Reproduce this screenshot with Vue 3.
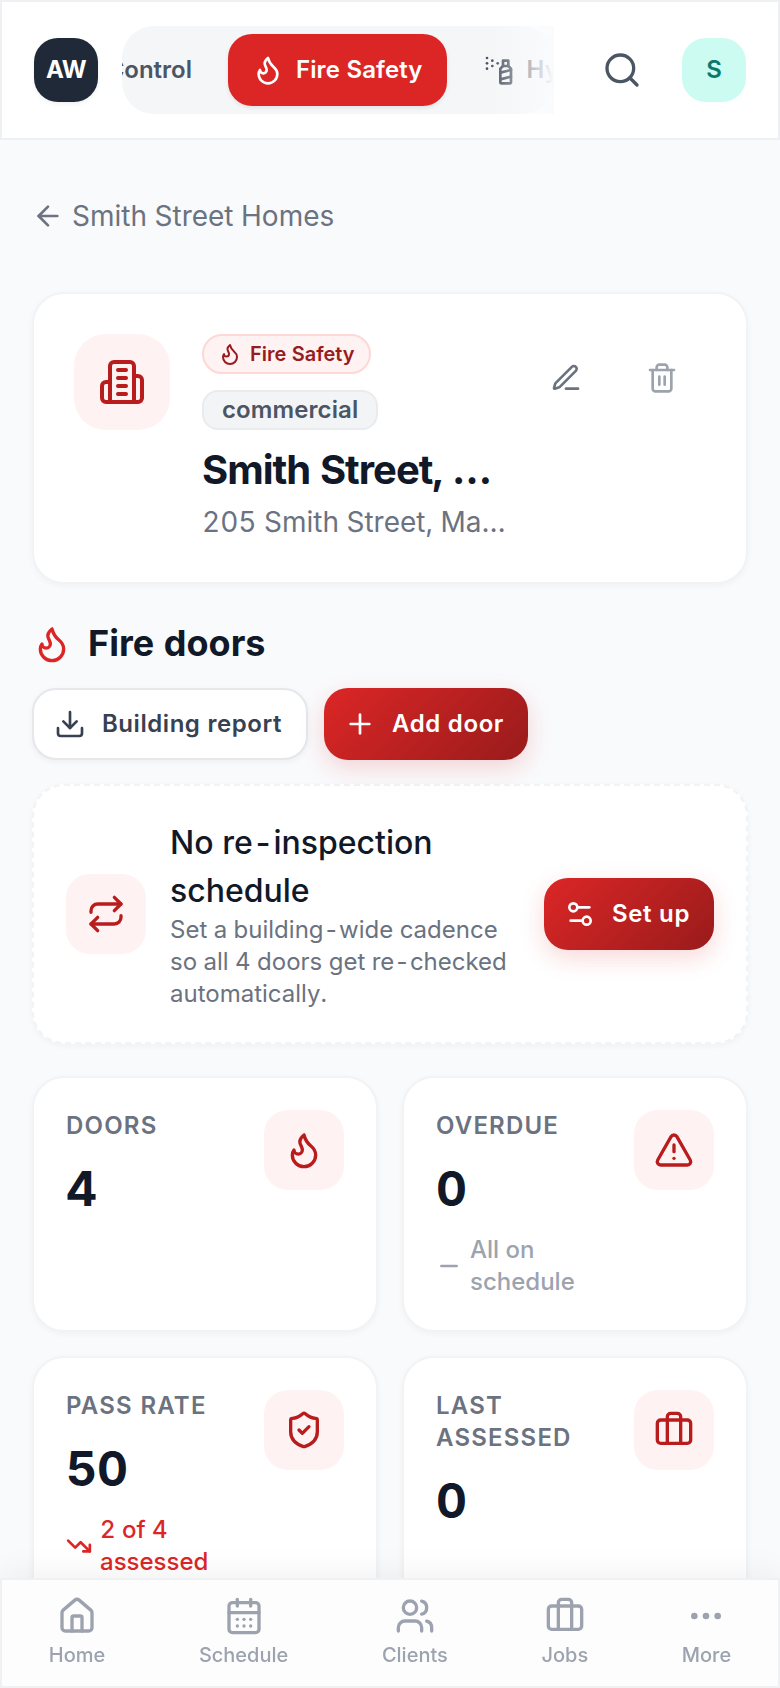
<template>
  <div class="screen">
    <header class="topbar">
      <div class="logo">AW</div>
      <div class="tabs-wrap">
        <div class="tabs">
          <button class="tab tab-first">Control</button>
          <button class="tab active">
            <svg class="icon s32" viewBox="0 0 24 24"><path v-for="d in icons.flame" :key="d" :d="d" /></svg>
            Fire Safety
          </button>
          <button class="tab">
            <svg class="icon s32" viewBox="0 0 24 24"><path v-for="d in icons.spray" :key="d" :d="d" /></svg>
            Hygiene
          </button>
        </div>
        <div class="fade"></div>
      </div>
      <button class="search">
        <svg class="icon s40" viewBox="0 0 24 24"><path v-for="d in icons.search" :key="d" :d="d" /></svg>
      </button>
      <div class="avatar">S</div>
    </header>

    <main class="content">
      <a class="back">
        <svg class="icon s32" viewBox="0 0 24 24"><path v-for="d in icons.arrowLeft" :key="d" :d="d" /></svg>
        <span>Smith Street Homes</span>
      </a>

      <section class="card building">
        <div class="building-icon">
          <svg class="icon s48" viewBox="0 0 24 24"><path v-for="d in icons.building" :key="d" :d="d" /></svg>
        </div>
        <div class="building-info">
          <span class="badge badge-red">
            <svg class="icon s24" viewBox="0 0 24 24"><path v-for="d in icons.flame" :key="d" :d="d" /></svg>
            Fire Safety
          </span>
          <span class="badge badge-gray">commercial</span>
          <h1>Smith Street, Marrickville</h1>
          <p>205 Smith Street, Marrickville</p>
        </div>
        <div class="actions">
          <button class="edit">
            <svg class="icon s32" viewBox="0 0 24 24"><path v-for="d in icons.pen" :key="d" :d="d" /></svg>
          </button>
          <button class="delete">
            <svg class="icon s32" viewBox="0 0 24 24"><path v-for="d in icons.trash" :key="d" :d="d" /></svg>
          </button>
        </div>
      </section>

      <div class="section-title">
        <svg class="icon s40" viewBox="0 0 24 24"><path v-for="d in icons.flame" :key="d" :d="d" /></svg>
        <h2>Fire doors</h2>
      </div>

      <div class="buttons">
        <button class="btn btn-secondary">
          <svg class="icon s32" viewBox="0 0 24 24"><path v-for="d in icons.download" :key="d" :d="d" /></svg>
          Building report
        </button>
        <button class="btn btn-primary">
          <svg class="icon s32" viewBox="0 0 24 24"><path v-for="d in icons.plus" :key="d" :d="d" /></svg>
          Add door
        </button>
      </div>

      <section class="card schedule">
        <div class="icon-box">
          <svg class="icon s40" viewBox="0 0 24 24"><path v-for="d in icons.repeat" :key="d" :d="d" /></svg>
        </div>
        <div class="schedule-text">
          <h3>No re-inspection schedule</h3>
          <p>Set a building-wide cadence so all 4 doors get re-checked automatically.</p>
        </div>
        <button class="btn btn-primary">
          <svg class="icon s32" viewBox="0 0 24 24"><path v-for="d in icons.settings" :key="d" :d="d" /></svg>
          Set up
        </button>
      </section>

      <div class="stats">
        <div v-for="stat in stats" :key="stat.label" class="card stat">
          <div class="stat-body">
            <div class="stat-label">{{ stat.label }}</div>
            <div class="stat-value">{{ stat.value }}</div>
            <div v-if="stat.note" class="stat-note" :class="stat.trend">
              <svg class="icon s26" viewBox="0 0 24 24"><path v-for="d in icons[stat.trend]" :key="d" :d="d" /></svg>
              <span>{{ stat.note }}</span>
            </div>
          </div>
          <div class="icon-box">
            <svg class="icon s40" viewBox="0 0 24 24"><path v-for="d in icons[stat.icon]" :key="d" :d="d" /></svg>
          </div>
        </div>
      </div>
    </main>

    <nav class="bottom-nav">
      <a v-for="item in nav" :key="item.label" class="nav-item">
        <svg class="icon s40" viewBox="0 0 24 24"><path v-for="d in icons[item.icon]" :key="d" :d="d" /></svg>
        <span>{{ item.label }}</span>
      </a>
    </nav>
  </div>
</template>

<script setup>
const stats = [
  { label: 'Doors', value: 4, icon: 'flame' },
  { label: 'Overdue', value: 0, icon: 'alert', note: 'All on schedule', trend: 'flat' },
  { label: 'Pass rate', value: 50, icon: 'shield', note: '2 of 4 assessed', trend: 'down' },
  { label: 'Last assessed', value: 0, icon: 'briefcase' }
]

const nav = [
  { label: 'Home', icon: 'home' },
  { label: 'Schedule', icon: 'calendar' },
  { label: 'Clients', icon: 'users' },
  { label: 'Jobs', icon: 'briefcase' },
  { label: 'More', icon: 'more' }
]

// 24x24 stroke paths
const icons = {
  flame: ['M12 3q1 4 4 6.5t3 5.5a1 1 0 0 1-14 0 5 5 0 0 1 1-3 1 1 0 0 0 5 0c0-2-1.5-3-1.5-5q0-2 2.5-4'],
  spray: [
    'M3 3h.01', 'M7 5h.01', 'M11 7h.01', 'M3 7h.01', 'M7 9h.01', 'M3 11h.01',
    'M15 5h4v4h-4z', 'm19 9 2 2v10c0 .6-.4 1-1 1h-6c-.6 0-1-.4-1-1V11l2-2', 'm13 14 8-2', 'm13 19 8-2'
  ],
  search: ['M3 11a8 8 0 1 0 16 0a8 8 0 1 0-16 0', 'm21 21-4.34-4.34'],
  arrowLeft: ['m12 19-7-7 7-7', 'M19 12H5'],
  building: [
    'M6 22V4a2 2 0 0 1 2-2h8a2 2 0 0 1 2 2v18Z', 'M6 12H4a2 2 0 0 0-2 2v6a2 2 0 0 0 2 2h2',
    'M18 9h2a2 2 0 0 1 2 2v9a2 2 0 0 1-2 2h-2', 'M10 6h4', 'M10 10h4', 'M10 14h4', 'M10 18h4'
  ],
  pen: [
    'M12 20h9',
    'M16.376 3.622a1 1 0 0 1 3.002 3.002L7.368 18.635a2 2 0 0 1-.855.506l-2.872.838a.5.5 0 0 1-.62-.62l.838-2.872a2 2 0 0 1 .506-.854z'
  ],
  trash: [
    'M3 6h18', 'M19 6v14c0 1-1 2-2 2H7c-1 0-2-1-2-2V6', 'M8 6V4c0-1 1-2 2-2h4c1 0 2 1 2 2v2',
    'M10 11v6', 'M14 11v6'
  ],
  download: ['M12 15V3', 'M21 15v4a2 2 0 0 1-2 2H5a2 2 0 0 1-2-2v-4', 'm7 10 5 5 5-5'],
  plus: ['M5 12h14', 'M12 5v14'],
  settings: ['M14 17H5', 'M19 7h-9', 'M14 17a3 3 0 1 0 6 0a3 3 0 1 0-6 0', 'M4 7a3 3 0 1 0 6 0a3 3 0 1 0-6 0'],
  repeat: ['m17 2 4 4-4 4', 'M3 11v-1a4 4 0 0 1 4-4h14', 'm7 22-4-4 4-4', 'M21 13v1a4 4 0 0 1-4 4H3'],
  alert: [
    'm21.73 18-8-14a2 2 0 0 0-3.48 0l-8 14A2 2 0 0 0 4 21h16a2 2 0 0 0 1.73-3', 'M12 9v4', 'M12 17h.01'
  ],
  shield: [
    'M20 13c0 5-3.5 7.5-7.66 8.95a1 1 0 0 1-.67-.01C7.5 20.5 4 18 4 13V6a1 1 0 0 1 1-1c2 0 4.5-1.2 6.24-2.72a1.17 1.17 0 0 1 1.52 0C14.51 3.81 17 5 19 5a1 1 0 0 1 1 1z',
    'm9 12 2 2 4-4'
  ],
  briefcase: [
    'M16 20V4a2 2 0 0 0-2-2h-4a2 2 0 0 0-2 2v16',
    'M4 6h16a2 2 0 0 1 2 2v10a2 2 0 0 1-2 2H4a2 2 0 0 1-2-2V8a2 2 0 0 1 2-2z'
  ],
  flat: ['M5 12h14'],
  down: ['M16 17h6v-6', 'm22 17-8.5-8.5-5 5L2 7'],
  home: [
    'M15 21v-8a1 1 0 0 0-1-1h-4a1 1 0 0 0-1 1v8',
    'M3 10a2 2 0 0 1 .709-1.528l7-5.999a2 2 0 0 1 2.582 0l7 5.999A2 2 0 0 1 21 10v9a2 2 0 0 1-2 2H5a2 2 0 0 1-2-2z'
  ],
  calendar: [
    'M8 2v4', 'M16 2v4', 'M5 4h14a2 2 0 0 1 2 2v14a2 2 0 0 1-2 2H5a2 2 0 0 1-2-2V6a2 2 0 0 1 2-2z', 'M3 10h18',
    'M8 14h.01', 'M12 14h.01', 'M16 14h.01', 'M8 18h.01', 'M12 18h.01', 'M16 18h.01'
  ],
  users: [
    'M16 21v-2a4 4 0 0 0-4-4H6a4 4 0 0 0-4 4v2', 'M16 3.128a4 4 0 0 1 0 7.744', 'M22 21v-2a4 4 0 0 0-3-3.87',
    'M5 7a4 4 0 1 0 8 0a4 4 0 1 0-8 0'
  ],
  more: [
    'M4 12a1 1 0 1 0 2 0a1 1 0 1 0-2 0', 'M11 12a1 1 0 1 0 2 0a1 1 0 1 0-2 0', 'M18 12a1 1 0 1 0 2 0a1 1 0 1 0-2 0'
  ]
}
</script>

<style>
body {
  background: #f9fafc;
}
</style>

<style scoped>
.screen {
  height: 1688px;
  overflow: hidden;
  background: #f9fafc;
  color: #111827;
  font-family: Inter, "Liberation Sans", sans-serif;
  font-feature-settings: "tnum";
}
.screen * {
  box-sizing: border-box;
}
h1, h2, h3, p {
  margin: 0;
}
button {
  border: 0;
  padding: 0;
  background: none;
  font: inherit;
  font-feature-settings: inherit;
  color: inherit;
}

.icon {
  flex: none;
  display: block;
  fill: none;
  stroke: currentColor;
  stroke-width: 2;
  stroke-linecap: round;
  stroke-linejoin: round;
}
.s24 { width: 24px; height: 24px; }
.s26 { width: 26px; height: 26px; }
.s32 { width: 32px; height: 32px; }
.s40 { width: 40px; height: 40px; }
.s48 { width: 48px; height: 48px; }

.topbar {
  height: 140px;
  display: flex;
  align-items: center;
  padding: 0 32px;
  background: #fff;
  border: 2px solid #eef0f3;
}
.logo, .avatar {
  flex: none;
  width: 64px;
  height: 64px;
  display: flex;
  align-items: center;
  justify-content: center;
  border-radius: 24px;
  font-size: 24px;
  line-height: 32px;
  font-weight: 600;
}
.logo {
  background: #1f2937;
  color: #fff;
  font-weight: 700;
  letter-spacing: -0.6px;
  box-shadow: 0 2px 4px rgba(0, 0, 0, 0.06);
}
.avatar {
  background: #ccfbf1;
  color: #0f766e;
}
.tabs-wrap {
  position: relative;
  width: 432px;
  margin: 0 24px;
}
.tabs {
  display: flex;
  gap: 12px;
  height: 88px;
  padding: 8px 0;
  overflow: hidden;
  border-radius: 32px;
  background: #f5f6f8;
}
.tab {
  flex: none;
  display: flex;
  align-items: center;
  gap: 12px;
  padding: 0 24px;
  border-radius: 24px;
  color: #4b5563;
  font-size: 24px;
  line-height: 32px;
  font-weight: 600;
  letter-spacing: 0.1px;
  white-space: nowrap;
}
/* scrolled partly out on the left */
.tab-first {
  width: 94px;
  justify-content: flex-end;
  letter-spacing: 0;
}
.tab.active {
  background: #dc2626;
  color: #fff;
  box-shadow: 0 2px 4px rgba(0, 0, 0, 0.08);
}
.fade {
  position: absolute;
  top: 0;
  right: 0;
  bottom: 0;
  width: 64px;
  background: linear-gradient(to right, rgba(250, 251, 253, 0), #fafbfd);
}
.search {
  width: 88px;
  height: 88px;
  margin-right: 16px;
  display: flex;
  align-items: center;
  justify-content: center;
  color: #4b5563;
}

.content {
  padding: 0 32px;
}
.back {
  display: flex;
  align-items: center;
  gap: 8px;
  height: 40px;
  margin: 56px 0;
  color: #6b7280;
  font-size: 28px;
}
.card {
  background: #fff;
  border: 2px solid #f2f3f5;
  border-radius: 32px;
  box-shadow: 0 2px 6px rgba(0, 0, 0, 0.04);
}

.building {
  display: flex;
  align-items: flex-start;
  height: 292px;
  padding: 40px;
}
.building-icon {
  flex: none;
  width: 96px;
  height: 96px;
  display: flex;
  align-items: center;
  justify-content: center;
  border-radius: 32px;
  background: #fef2f2;
  color: #b91c1c;
}
.building-info {
  flex: 1;
  min-width: 0;
  margin: 0 16px 0 32px;
  display: flex;
  flex-direction: column;
  align-items: flex-start;
}
.badge {
  height: 40px;
  display: flex;
  align-items: center;
  border: 2px solid;
  font-weight: 600;
}
.badge-red {
  gap: 8px;
  padding: 0 14px;
  border-color: #fed7d7;
  border-radius: 20px;
  background: #fef2f2;
  color: #991b1b;
  font-size: 20px;
}
.badge-gray {
  margin-top: 16px;
  padding: 0 18px;
  border-color: #e9ebee;
  border-radius: 16px;
  background: #f3f4f6;
  color: #4b5563;
  font-size: 24px;
  line-height: 32px;
  letter-spacing: 0.1px;
}
.building-info h1, .building-info p {
  width: 100%;
  overflow: hidden;
  text-overflow: ellipsis;
  white-space: nowrap;
}
.building-info h1 {
  margin-top: 16px;
  font-size: 40px;
  line-height: 48px;
  font-weight: 700;
  letter-spacing: -1px;
}
.building-info p {
  margin-top: 8px;
  color: #6b7280;
  font-size: 28px;
  line-height: 40px;
}
.actions {
  display: flex;
  gap: 8px;
}
.actions button {
  width: 88px;
  height: 88px;
  display: flex;
  align-items: center;
  justify-content: center;
}
.edit { color: #6b7280; }
.delete { color: #9ca3af; }

.section-title {
  display: flex;
  align-items: center;
  gap: 16px;
  height: 56px;
  margin-top: 32px;
}
.section-title .icon {
  color: #dc2626;
}
.section-title h2 {
  padding-bottom: 2px;
  font-size: 36px;
  line-height: 54px;
  font-weight: 700;
}
.buttons {
  display: flex;
  gap: 16px;
  margin: 16px 0 24px;
}
.btn {
  flex: none;
  height: 72px;
  display: flex;
  align-items: center;
  gap: 16px;
  padding: 0 24px 0 20px;
  border-radius: 24px;
  font-size: 24px;
  line-height: 32px;
  font-weight: 600;
  letter-spacing: 0.6px;
}
.btn-secondary {
  background: #fff;
  border: 2px solid #e5e7eb;
  color: #374151;
  letter-spacing: 0.55px;
  box-shadow: 0 2px 6px rgba(0, 0, 0, 0.05);
}
.btn-primary {
  background: linear-gradient(135deg, #dc2626, #991b1b);
  color: #fff;
  box-shadow: 0 8px 24px rgba(220, 38, 38, 0.18);
}

.schedule {
  display: flex;
  align-items: center;
  gap: 24px;
  height: 260px;
  padding: 32px;
  border-style: dashed;
}
.icon-box {
  flex: none;
  width: 80px;
  height: 80px;
  display: flex;
  align-items: center;
  justify-content: center;
  border-radius: 24px;
  background: #fef2f2;
  color: #b91c1c;
}
.schedule-text {
  flex: 1;
  min-width: 0;
}
.schedule-text h3 {
  margin: 1px 0 -1px;
  font-size: 32px;
  line-height: 48px;
  font-weight: 500;
}
.schedule-text p {
  color: #6b7280;
  font-size: 24px;
  line-height: 32px;
}

.stats {
  display: grid;
  grid-template-columns: 1fr 1fr;
  grid-auto-rows: 256px;
  gap: 24px;
  margin-top: 32px;
}
.stat {
  display: flex;
  align-items: flex-start;
  gap: 24px;
  padding: 32px;
}
.stat-body {
  flex: 1;
  min-width: 0;
}
.stat-label {
  color: #6b7280;
  font-size: 24px;
  line-height: 32px;
  font-weight: 600;
  letter-spacing: 1.2px;
  text-transform: uppercase;
}
.stat-value {
  margin: 17px 0 15px;
  font-size: 48px;
  line-height: 60px;
  font-weight: 700;
}
.stat-note {
  display: flex;
  align-items: center;
  gap: 8px;
  font-size: 24px;
  line-height: 32px;
  font-weight: 500;
}
.stat-note .icon {
  stroke-width: 2.5;
}
.flat { color: #9ca3af; }
.down { color: #dc2626; }

.bottom-nav {
  position: fixed;
  left: 0;
  right: 0;
  bottom: 0;
  height: 110px;
  display: flex;
  justify-content: space-around;
  padding-top: 16px;
  background: #fdfdfe;
  border: 2px solid #f0f1f3;
  box-shadow: 0 -4px 32px rgba(0, 0, 0, 0.06);
}
.nav-item {
  display: flex;
  flex-direction: column;
  align-items: center;
  gap: 4px;
  color: #9ca3af;
  font-size: 20px;
  line-height: 30px;
  font-weight: 500;
}
</style>
